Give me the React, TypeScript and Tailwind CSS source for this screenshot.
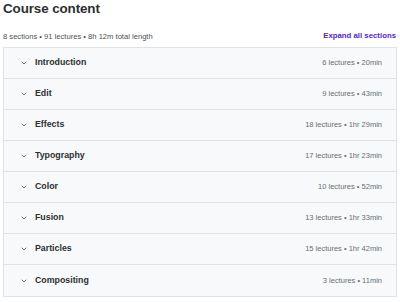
import React from "react";

type Section = {
  title: string;
  meta: string;
};

const sections: Section[] = [
  { title: "Introduction", meta: "6 lectures • 20min" },
  { title: "Edit", meta: "9 lectures • 43min" },
  { title: "Effects", meta: "18 lectures • 1hr 29min" },
  { title: "Typography", meta: "17 lectures • 1hr 23min" },
  { title: "Color", meta: "10 lectures • 52min" },
  { title: "Fusion", meta: "13 lectures • 1hr 33min" },
  { title: "Particles", meta: "15 lectures • 1hr 42min" },
  { title: "Compositing", meta: "3 lectures • 11min" },
];

const Chevron = () => (
  <svg width="6" height="4" viewBox="0 0 6 4" fill="none" className="shrink-0">
    <path d="M1 1 L3 3 L5 1" stroke="#6a6f73" strokeWidth="0.9" strokeLinecap="round" strokeLinejoin="round" />
  </svg>
);

const App = () => {
  return (
    <div
      className="w-[400px] h-[302px] bg-white px-[3px] text-[#2d2f31] overflow-hidden"
      style={{ fontFamily: '"Liberation Sans", Arial, sans-serif' }}
    >
      <h2 className="text-[13.4px] font-bold leading-[18px] tracking-[-0.1px]">Course content</h2>
      <div className="flex justify-between items-end mt-[12px] h-[12px]">
        <span className="text-[7.6px] text-[#4d5154]">
          8 sections • 91 lectures • 8h 12m total length
        </span>
        <button className="text-[7.8px] font-bold text-[#5624d0] mr-[1px]">Expand all sections</button>
      </div>
      <div className="mt-[5px] border border-[#dfe3e6] w-[394px]">
        {sections.map((s, i) => (
          <div
            key={s.title}
            className={`h-[31px] flex items-center bg-[#f7f9fa] pl-[17px] pr-[14px] ${
              i < sections.length - 1 ? "border-b border-[#dfe3e6]" : ""
            }`}
          >
            <Chevron />
            <span className="ml-[8px] text-[8.8px] font-bold text-[#2d2f31]">{s.title}</span>
            <span className="ml-auto text-[7.5px] text-[#6a6f73]">{s.meta}</span>
          </div>
        ))}
      </div>
    </div>
  );
};

export default App;
